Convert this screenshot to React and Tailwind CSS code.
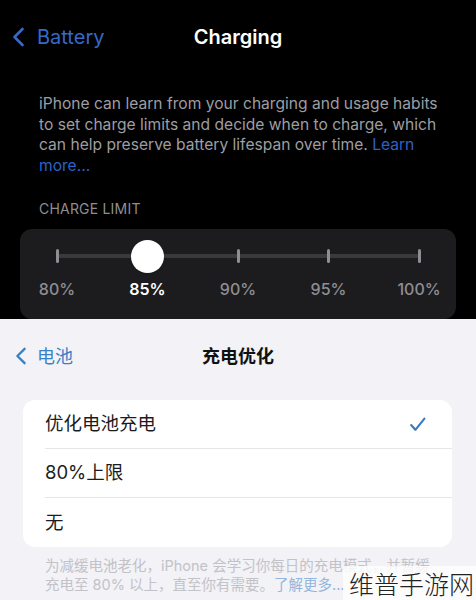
const ticks = ["80%", "85%", "90%", "95%", "100%"];

function Chevron({ className }) {
  return (
    <svg viewBox="0 0 12 20" className={className} fill="none" stroke="currentColor" strokeWidth="2.6" strokeLinecap="round" strokeLinejoin="round">
      <path d="M10 2 L2 10 L10 18" />
    </svg>
  );
}

function ChargeSlider() {
  return (
    <div className="mx-5 h-[90px] rounded-xl bg-[#1c1c1e] px-[17px] pt-[19px]">
      <div className="relative mx-[20px] h-4">
        <div className="absolute left-0 right-0 top-[6px] h-[4px] rounded bg-[#3a3a3c]" />
        <div className="relative flex h-4 items-center justify-between">
          {ticks.map((t, i) => (
            <div key={t} className="flex w-0 justify-center">
              {i === 1 ? (
                <div className="h-[33px] w-[33px] shrink-0 rounded-full bg-white shadow" />
              ) : (
                <div className="h-[14px] w-[3px] shrink-0 rounded-sm bg-[#8e8e93]" />
              )}
            </div>
          ))}
        </div>
      </div>
      <div className="mx-[20px] mt-[13px] flex justify-between">
        {ticks.map((t, i) => (
          <div key={t} className="flex w-0 justify-center">
            <span className={i === 1 ? "text-[16px] font-semibold text-white" : "text-[16px] font-medium text-[#8e8e93]"}>{t}</span>
          </div>
        ))}
      </div>
    </div>
  );
}

function OptionRow({ label, checked, last }) {
  return (
    <div className="pl-[22px]">
      <div className={"flex h-[49px] items-center justify-between pr-[26px] " + (last ? "" : "border-b border-[#e6e6ea]")}>
        <span className="text-[18.5px] text-[#1c1c1e]">{label}</span>
        {checked && (
          <svg viewBox="0 0 16 16" className="h-[17px] w-[17px] text-[#3a7bbf]" fill="none" stroke="currentColor" strokeWidth="2" strokeLinecap="round" strokeLinejoin="round">
            <path d="M2 8.5 L6 13 L14.5 2.5" />
          </svg>
        )}
      </div>
    </div>
  );
}

export default function App() {
  return (
    <div className="relative h-[600px] w-[476px] overflow-hidden bg-black font-['Inter','Noto_Sans_CJK_SC',sans-serif]">
      <section className="h-[319px] bg-black">
        <div className="grid h-[74px] grid-cols-[1fr_auto_1fr] items-center pb-[1px]">
          <div className="flex items-center gap-[12px] pl-[12px] text-[#3669c9]">
            <Chevron className="h-[20px] w-[13px]" />
            <span className="text-[20px]">Battery</span>
          </div>
          <div className="text-[20px] font-semibold text-white">Charging</div>
          <div />
        </div>
        <p className="mt-[20px] pl-[39px] pr-[30px] text-[15.6px] leading-[20.5px] text-[#9d9da2]">
          iPhone can learn from your charging and usage habits to set charge limits and decide when to charge, which can help preserve battery lifespan over time. <span className="text-[#2d62c6]">Learn more...</span>
        </p>
        <div className="mt-[22px] mb-[10px] pl-[39px] text-[14px] tracking-[0.2px] text-[#8e8e93]">CHARGE LIMIT</div>
        <ChargeSlider />
      </section>

      <section className="h-[281px] bg-[#f2f2f7]">
        <div className="grid h-[73px] grid-cols-[1fr_auto_1fr] items-center pt-[1px]">
          <div className="flex items-center gap-[10px] pl-[15px] text-[#3a80c4]">
            <Chevron className="h-[18px] w-[12px]" />
            <span className="text-[18px]">电池</span>
          </div>
          <div className="text-[18px] font-bold text-[#111]">充电优化</div>
          <div />
        </div>
        <div className="ml-[23px] mr-[24px] mt-[8px] overflow-hidden rounded-xl bg-white">
          <OptionRow label="优化电池充电" checked />
          <OptionRow label="80%上限" />
          <OptionRow label="无" last />
        </div>
        <p className="mt-[9px] whitespace-nowrap pl-[45px] text-[14.5px] leading-[19px] text-[#c2c2c7]">
          为减缓电池老化，iPhone 会学习你每日的充电模式，并暂缓
          <br />
          充电至 80% 以上，直至你有需要。<span className="text-[#93b6dc]">了解更多...</span>
        </p>
      </section>

      <div className="absolute bottom-0 right-0 flex h-[34px] items-center bg-white/80 pl-[6px] pr-[2px] font-['Noto_Sans_CJK_SC',sans-serif] text-[25px] font-light leading-none text-[#222]">
        维普手游网
      </div>
    </div>
  );
}
